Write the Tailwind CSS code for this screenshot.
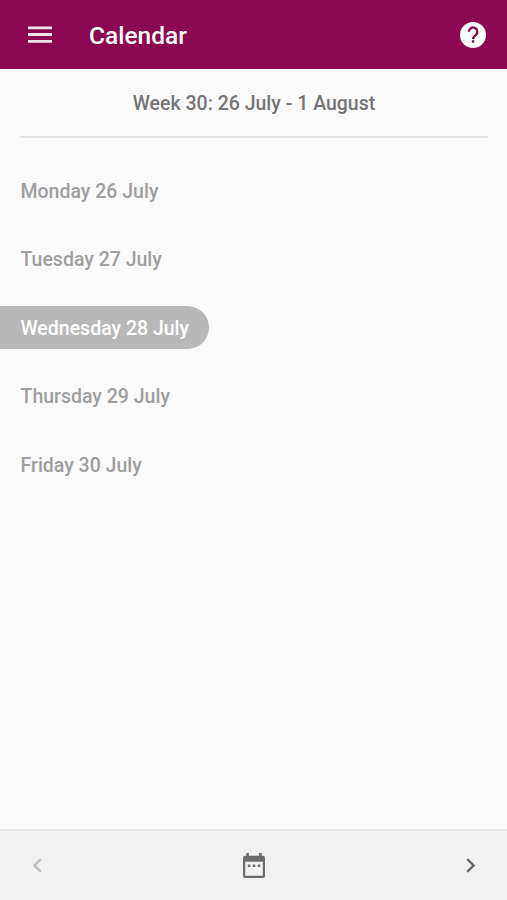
<!DOCTYPE html>
<html lang="en">
<head>
    <meta charset="UTF-8">
    <meta name="viewport" content="width=device-width, initial-scale=1.0">
    <title>Calendar</title>
    <script src="https://cdn.jsdelivr.net/npm/@tailwindcss/browser@4"></script>
</head>
<body class="font-['Roboto',sans-serif] font-medium bg-[#fafafa] h-screen flex flex-col overflow-hidden">
    <!-- App bar -->
    <header class="h-[69px] shrink-0 bg-[#8a0850] text-white flex items-center pl-7 pr-[21px]">
        <button aria-label="Menu">
            <svg class="w-6 h-[18px]" viewBox="0 0 24 18" fill="#f7e1ee"><path d="M0 .5h24v2.800H0zM0 7.100h24v2.800H0zM0 13.900h24v2.800H0z"/></svg>
        </button>
        <h1 class="ml-[37px] pt-0.5 text-[24.500px] leading-8 flex-1">Calendar</h1>
        <button aria-label="Help">
            <svg class="size-[26px]" viewBox="0 0 26 26">
                <circle cx="13" cy="13" r="13" fill="#fff"/>
                <path d="M8.900 9.800a4.200 4.200 0 1 1 7 3.100c-1.700 1.500-2.800 2-2.800 4" fill="none" stroke="#8a0850" stroke-width="2.400"/>
                <path d="M11.800 18.200h2.500v2.500h-2.500z" fill="#8a0850"/>
            </svg>
        </button>
    </header>

    <!-- Days of the week -->
    <main class="flex-1">
        <h2 class="ml-5 mr-[19px] h-[69px] border-b-2 border-[#e6e6e6] text-center text-[19.500px] leading-[69px] text-[#757575]">Week 30: 26 July - 1 August</h2>
        <ul class="mt-[31px] flex flex-col gap-[25.400px] items-start text-[19.500px] leading-[41px] text-[#9e9e9e]">
            <li class="pt-0.5 pl-[20.500px]">Monday 26 July</li>
            <li class="pt-0.5 pl-[20.500px]">Tuesday 27 July</li>
            <li class="pt-0.5 pl-[20.500px] pr-[19.500px] rounded-r-full bg-[#b8b8b8] text-white">Wednesday 28 July</li>
            <li class="pt-0.5 pl-[20.500px]">Thursday 29 July</li>
            <li class="pt-0.5 pl-[20.500px]">Friday 30 July</li>
        </ul>
    </main>

    <!-- Week navigation -->
    <footer class="h-[71px] shrink-0 bg-[#f1f1f1] border-t-2 border-[#e8e8e8] flex items-center justify-between pl-[23px] pr-[22px] text-[#6b6b6b]">
        <button aria-label="Previous week" class="text-[#bdbdbd]">
            <svg class="size-[29px]" viewBox="0 0 24 24" fill="currentColor"><path d="M15.410 7.410L14 6l-6 6 6 6 1.410-1.410L10.830 12z"/></svg>
        </button>
        <button aria-label="Pick a date">
            <svg class="w-[22px] h-[25px]" viewBox="0 0 22 25" fill="currentColor"><path fill-rule="evenodd" d="M3.300 0h2.600v2.700h10.200V0h2.600v2.700H20a2 2 0 0 1 2 2V23a2 2 0 0 1-2 2H2a2 2 0 0 1-2-2V4.700a2 2 0 0 1 2-2h1.300zM2.200 8.800v14h17.600v-14z"/><path d="M4.800 11.500h2.500V14H4.800zM9.800 11.500h2.500V14H9.800zM14.700 11.500h2.500V14h-2.500z"/></svg>
        </button>
        <button aria-label="Next week">
            <svg class="size-[29px]" viewBox="0 0 24 24" fill="currentColor"><path d="M10 6L8.590 7.410 13.170 12l-4.580 4.590L10 18l6-6z"/></svg>
        </button>
    </footer>
</body>
</html>
